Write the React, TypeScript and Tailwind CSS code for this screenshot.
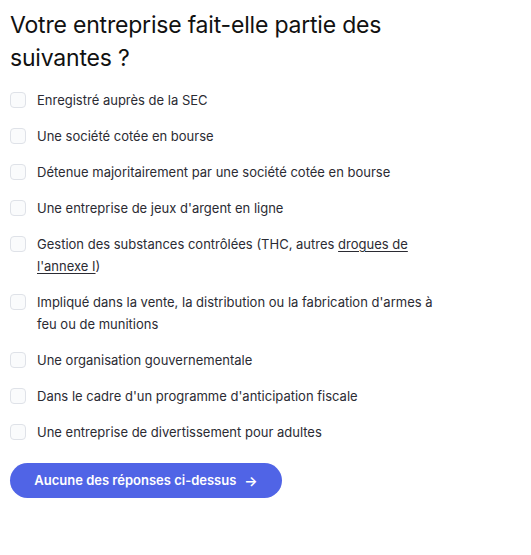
import React from "react";

const items: React.ReactNode[] = [
  "Enregistré auprès de la SEC",
  "Une société cotée en bourse",
  "Détenue majoritairement par une société cotée en bourse",
  "Une entreprise de jeux d'argent en ligne",
  <>
    Gestion des substances contrôlées (THC, autres{" "}
    <span className="underline underline-offset-2">drogues de l'annexe I</span>)
  </>,
  "Impliqué dans la vente, la distribution ou la fabrication d'armes à feu ou de munitions",
  "Une organisation gouvernementale",
  "Dans le cadre d'un programme d'anticipation fiscale",
  "Une entreprise de divertissement pour adultes",
];

export default function App() {
  return (
    <div
      className="bg-white w-[531px] h-[555px] px-[10px] pt-[9px]"
      style={{ fontFamily: "Inter, 'Noto Sans', sans-serif" }}
    >
      <h1 className="text-[23px] leading-[33px] text-[#111111] font-normal w-[400px] tracking-[-0.2px]">
        Votre entreprise fait-elle partie des suivantes ?
      </h1>
      <ul className="mt-[14px] flex flex-col gap-[14px] w-[432px]">
        {items.map((t, i) => (
          <li key={i} className="flex items-start gap-[11px]">
            <span className="mt-[3px] w-4 h-4 shrink-0 rounded-[4px] border border-[#dfe2e8] bg-[#fafbfc]" />
            <span className="text-[13px] leading-[22px] text-[#2b2b33]">{t}</span>
          </li>
        ))}
      </ul>
      <button className="mt-[20px] h-[35px] w-[272px] rounded-full bg-[#5064e6] text-white text-[13px] font-semibold flex items-center justify-center gap-2">
        <span>Aucune des réponses ci-dessus</span>
        <span className="text-[14px]">→</span>
      </button>
    </div>
  );
}
